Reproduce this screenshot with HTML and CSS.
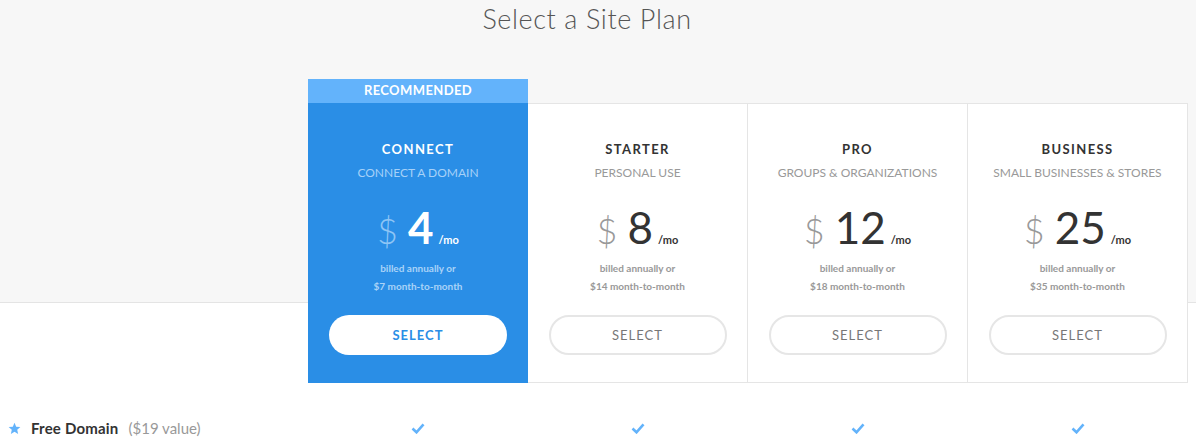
FILE: index.html
```html
<!DOCTYPE html>
<html>
<head>
<meta charset="utf-8">
<link rel="stylesheet" href="styles.css">
</head>
<body>
<div class="page">
  <h1 class="title">Select a Site Plan</h1>
  <div class="plans">
    <div class="plan plan-featured">
      <div class="ribbon">RECOMMENDED</div>
      <div class="plan-body">
        <div class="plan-name">CONNECT</div>
        <div class="plan-sub">CONNECT A DOMAIN</div>
        <div class="price"><span class="cur">$</span><span class="amt">4</span><span class="per">/mo</span></div>
        <div class="billing">billed annually or<br>$7 month-to-month</div>
        <button class="btn">SELECT</button>
      </div>
    </div>
    <div class="plan">
      <div class="plan-body">
        <div class="plan-name">STARTER</div>
        <div class="plan-sub">PERSONAL USE</div>
        <div class="price"><span class="cur">$</span><span class="amt">8</span><span class="per">/mo</span></div>
        <div class="billing">billed annually or<br>$14 month-to-month</div>
        <button class="btn">SELECT</button>
      </div>
    </div>
    <div class="plan">
      <div class="plan-body">
        <div class="plan-name">PRO</div>
        <div class="plan-sub">GROUPS &amp; ORGANIZATIONS</div>
        <div class="price"><span class="cur">$</span><span class="amt">12</span><span class="per">/mo</span></div>
        <div class="billing">billed annually or<br>$18 month-to-month</div>
        <button class="btn">SELECT</button>
      </div>
    </div>
    <div class="plan">
      <div class="plan-body">
        <div class="plan-name">BUSINESS</div>
        <div class="plan-sub">SMALL BUSINESSES &amp; STORES</div>
        <div class="price"><span class="cur">$</span><span class="amt">25</span><span class="per">/mo</span></div>
        <div class="billing">billed annually or<br>$35 month-to-month</div>
        <button class="btn">SELECT</button>
      </div>
    </div>
  </div>
  <div class="feature-row">
    <div class="feature-label">
      <svg class="star" viewBox="0 0 24 24" width="13" height="13"><path d="M12 1.5l3.1 7.1 7.7.7-5.8 5.1 1.7 7.6L12 18l-6.7 4 1.7-7.6L1.2 9.3l7.7-.7z" fill="#63b3fb"/></svg>
      <span class="feature-name">Free Domain</span>
      <span class="feature-value">($19 value)</span>
    </div>
    <div class="feature-cell"><svg class="check" viewBox="0 0 14 11" width="14" height="11"><path d="M1.5 5.5l4 3.8 7-8" fill="none" stroke="#63b3fb" stroke-width="2.6"/></svg></div>
    <div class="feature-cell"><svg class="check" viewBox="0 0 14 11" width="14" height="11"><path d="M1.5 5.5l4 3.8 7-8" fill="none" stroke="#63b3fb" stroke-width="2.6"/></svg></div>
    <div class="feature-cell"><svg class="check" viewBox="0 0 14 11" width="14" height="11"><path d="M1.5 5.5l4 3.8 7-8" fill="none" stroke="#63b3fb" stroke-width="2.6"/></svg></div>
    <div class="feature-cell"><svg class="check" viewBox="0 0 14 11" width="14" height="11"><path d="M1.5 5.5l4 3.8 7-8" fill="none" stroke="#63b3fb" stroke-width="2.6"/></svg></div>
  </div>
</div>
</body>
</html>
```
FILE: styles.css
```css
html, body {
  margin: 0;
  padding: 0;
}
body {
  font-family: "Lato", "Open Sans", sans-serif;
  background: linear-gradient(#f7f7f7 0, #f7f7f7 302px, #e4e4e4 302px, #e4e4e4 303px, #ffffff 303px);
  width: 1196px;
  height: 440px;
  overflow: hidden;
}
.page {
  display: flex;
  flex-direction: column;
}
.title {
  margin: 0;
  height: 40px;
  text-align: center;
  font-weight: 300;
  font-size: 27px;
  line-height: 38px;
  color: #555;
  letter-spacing: 0.6px;
  margin-left: -22px;
}
.plans {
  display: grid;
  grid-template-columns: repeat(4, 220px);
  margin-left: 308px;
  margin-top: 39px;
}
.plan {
  display: flex;
  flex-direction: column;
  margin-top: 24px;
  height: 280px;
  box-sizing: border-box;
  background: #fff;
  border-top: 1px solid #e5e5e5;
  border-bottom: 1px solid #e5e5e5;
  border-right: 1px solid #e5e5e5;
}
.plan-featured {
  margin-top: 0;
  height: 304px;
  border: none;
  background: #2a8ee6;
}
.ribbon {
  height: 24px;
  background: #63b3fb;
  color: #fff;
  font-weight: 700;
  font-size: 13px;
  line-height: 23px;
  text-align: center;
  letter-spacing: 0.4px;
}
.plan-body {
  display: flex;
  flex-direction: column;
  align-items: center;
}
.plan .plan-body { padding-top: 36px; }
.plan-featured .plan-body { padding-top: 37px; }
.plan-name {
  font-weight: 700;
  font-size: 13px;
  letter-spacing: 1.4px;
  line-height: 18px;
  color: #333;
}
.plan-sub {
  margin-top: 7px;
  font-size: 12px;
  line-height: 16px;
  color: #999;
}
.price {
  margin-top: 20px;
  display: flex;
  align-items: baseline;
  height: 52px;
  line-height: 52px;
}
.cur {
  font-weight: 300;
  font-size: 36px;
  color: #999;
  margin-right: 10px;
}
.amt {
  font-weight: 400;
  font-size: 44px;
  color: #333;
  margin-right: 5px;
}
.per {
  font-weight: 700;
  font-size: 11px;
  color: #333;
}
.billing {
  margin-top: 6px;
  font-weight: 700;
  font-size: 10px;
  line-height: 18px;
  text-align: center;
  color: #999;
}
.btn {
  margin-top: 20px;
  width: 178px;
  height: 40px;
  border-radius: 20px;
  border: 2px solid #e6e6e6;
  background: #fff;
  font-family: "Lato", sans-serif;
  font-size: 13px;
  letter-spacing: 1px;
  color: #777;
  padding: 0;
}
.plan-featured .plan-name { color: #fff; }
.plan-featured .plan-sub { color: #a6d1f8; }
.plan-featured .cur { color: #8ec5f5; }
.plan-featured .amt { color: #fff; font-weight: 700; }
.plan-featured .per { color: #fff; }
.plan-featured .billing { color: #a9d3f8; }
.plan-featured .btn {
  border: none;
  color: #2a8ee6;
  font-weight: 700;
}
.feature-row {
  display: grid;
  grid-template-columns: 308px repeat(4, 220px);
  margin-top: 34px;
  height: 22px;
  align-items: center;
}
.feature-label {
  display: flex;
  align-items: center;
  padding-left: 8px;
  font-size: 15px;
}
.star { margin-right: 10px; }
.feature-name {
  font-weight: 700;
  color: #333;
  letter-spacing: 0.2px;
  margin-right: 10px;
}
.feature-value { color: #999; }
.feature-cell {
  display: flex;
  justify-content: center;
}
```
